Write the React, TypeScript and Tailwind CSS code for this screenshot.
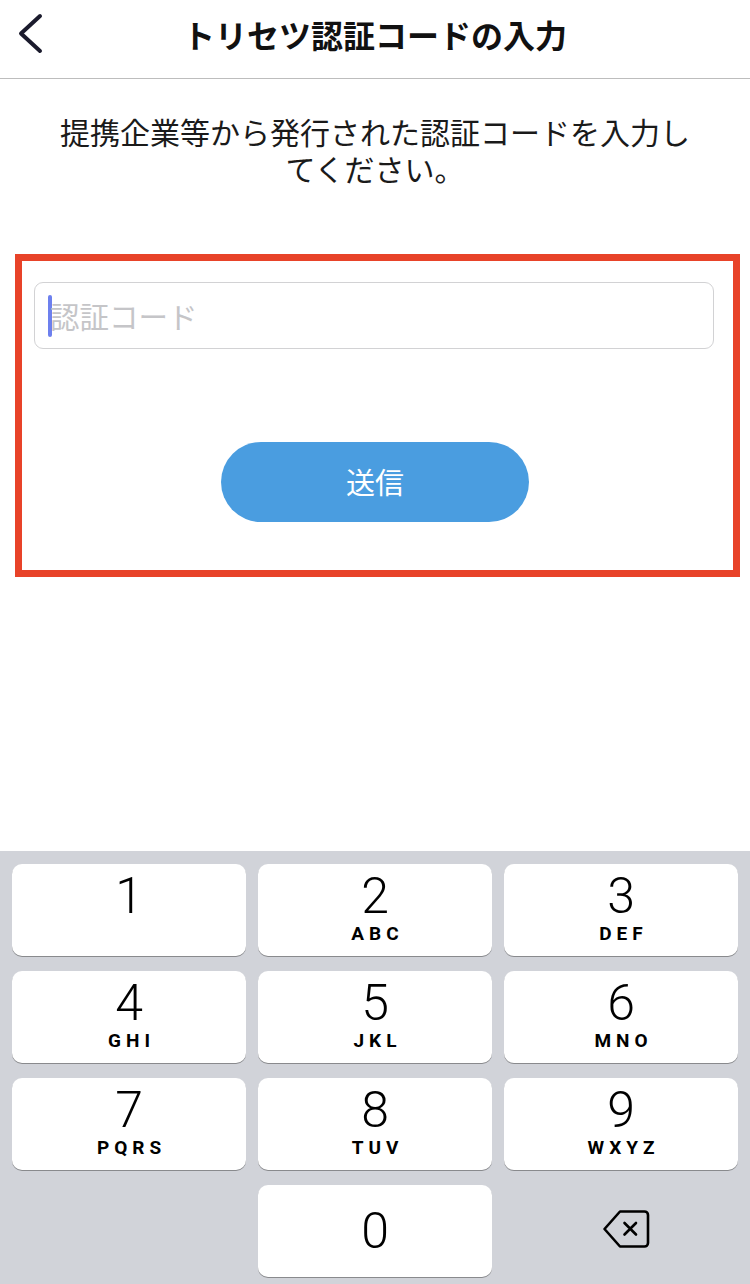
import React from "react";

const jp = { fontFamily: '"Noto Sans CJK JP", "Noto Sans", sans-serif' };
const keyFont = { fontFamily: 'Roboto, "Liberation Sans", sans-serif' };

const keys: { d: string; l: string }[] = [
  { d: "1", l: "" },
  { d: "2", l: "ABC" },
  { d: "3", l: "DEF" },
  { d: "4", l: "GHI" },
  { d: "5", l: "JKL" },
  { d: "6", l: "MNO" },
  { d: "7", l: "PQRS" },
  { d: "8", l: "TUV" },
  { d: "9", l: "WXYZ" },
];

function Key({ d, l }: { d: string; l: string }) {
  return (
    <div
      className="h-[92px] bg-white rounded-[10px] shadow-[0_1px_0_#898a8d] flex flex-col items-center text-black"
      style={keyFont}
    >
      <span className="mt-[7px] text-[50px] leading-[50px] font-light">{d}</span>
      <span className="mt-[2px] text-[19px] leading-[22px] font-bold tracking-[5px] pl-[5px]">
        {l}
      </span>
    </div>
  );
}

export default function App() {
  return (
    <div className="w-[750px] h-[1284px] bg-white flex flex-col overflow-hidden" style={jp}>
      {/* ヘッダー */}
      <div className="h-[79px] border-b border-[#bdbdbd] grid grid-cols-[80px_1fr_80px] items-center shrink-0">
        <svg width="60" height="79" viewBox="0 0 60 79">
          <polyline
            points="40,16 21,33.5 40,51"
            fill="none"
            stroke="#1b1b2d"
            strokeWidth="4"
            strokeLinecap="round"
            strokeLinejoin="round"
          />
        </svg>
        <h1 className="text-center text-[32px] leading-[40px] font-bold text-[#111] -mt-[12px]">
          トリセツ認証コードの入力
        </h1>
        <div />
      </div>

      {/* 説明 */}
      <p className="w-[640px] mx-auto mt-[34px] text-center text-[30px] leading-[37px] text-[#1a1a1a]">
        提携企業等から発行された認証コードを入力してください。
      </p>

      {/* 入力エリア */}
      <div className="mt-[67px] ml-[15px] w-[725px] h-[323px] border-[7px] border-[#e84329] flex flex-col">
        <div className="mt-[21px] ml-[12px] w-[680px] h-[67px] rounded-[9px] border border-[#d2d2d4] flex items-center pl-[13px]">
          <span className="w-[4px] h-[42px] bg-[#6d80ee] rounded-full" />
          <span className="text-[29.5px] text-[#c5c5c8] -ml-[2px]">認証コード</span>
        </div>
        <button className="mt-[93px] ml-[199px] w-[308px] h-[80px] rounded-full bg-[#4a9de0] text-white text-[29px]">
          送信
        </button>
      </div>

      <div className="flex-1" />

      {/* テンキー */}
      <div className="h-[433px] bg-[#d1d3d9] px-[12px] pt-[13px] shrink-0">
        <div className="grid grid-cols-3 gap-x-[12px] gap-y-[15px]">
          {keys.map((k) => (
            <Key key={k.d} d={k.d} l={k.l} />
          ))}
          <div />
          <div
            className="h-[92px] bg-white rounded-[10px] shadow-[0_1px_0_#898a8d] flex items-center justify-center text-black"
            style={keyFont}
          >
            <span className="text-[50px] leading-[50px] font-light">0</span>
          </div>
          <div className="h-[92px] flex items-center justify-center">
            <svg width="48" height="40" viewBox="0 0 48 40" className="ml-[9px] -mt-[4px]">
              <path
                d="M18 2.5 H42.5 a3.5 3.5 0 0 1 3.5 3.5 V34 a3.5 3.5 0 0 1 -3.5 3.5 H18 L2.5 20 Z"
                fill="none"
                stroke="#000"
                strokeWidth="2.6"
                strokeLinejoin="round"
              />
              <path
                d="M22.5 14 L34 25.5 M34 14 L22.5 25.5"
                stroke="#000"
                strokeWidth="2.6"
                strokeLinecap="round"
              />
            </svg>
          </div>
        </div>
      </div>
    </div>
  );
}
